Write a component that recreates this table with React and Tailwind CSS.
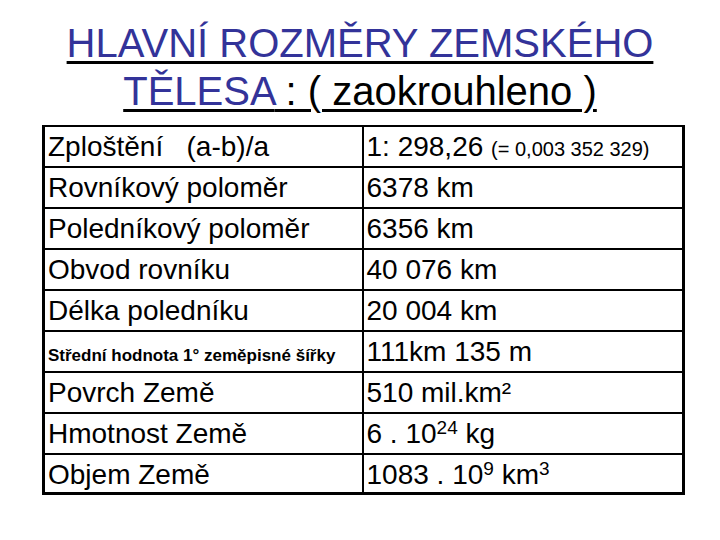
const rows = [
  { label: 'Zploštění\u00a0\u00a0\u00a0(a-b)/a', value: <>1: 298,26 <span className="text-[20px]">(= 0,003 352 329)</span></> },
  { label: 'Rovníkový poloměr', value: '6378 km' },
  { label: 'Poledníkový poloměr', value: '6356 km' },
  { label: 'Obvod rovníku', value: '40 076 km' },
  { label: 'Délka poledníku', value: '20 004 km' },
  { label: <span className="text-[17px] font-bold">Střední hodnota 1° zeměpisné šířky</span>, value: '111km 135 m' },
  { label: 'Povrch Země', value: '510 mil.km²' },
  { label: 'Hmotnost Země', value: <>6 . 10<sup className="text-[19px] top-[-0.5em]">24</sup> kg</> },
  { label: 'Objem Země', value: <>1083 . 10<sup className="text-[19px] top-[-0.5em]">9</sup> km<sup className="text-[19px] top-[-0.5em]">3</sup></> },
];

export default function App() {
  return (
    <div className="w-[720px] h-[540px] bg-white overflow-hidden [font-family:'Liberation_Sans',Arial,sans-serif] text-black">
      {/* Title */}
      <h1 className="pt-[19px] text-center text-[40px] leading-[48px] underline decoration-[3px] underline-offset-[4px]">
        <span className="text-[#333399]">HLAVNÍ ROZMĚRY ZEMSKÉHO</span>
        <br />
        <span className="text-[#333399]">TĚLESA</span>
        <span> : ( zaokrouhleno )</span>
      </h1>

      {/* Table */}
      <div className="mt-[10px] ml-[42px] w-[643px] border-t-2 border-x-[3px] border-b-[3px] border-black grid grid-cols-2">
        {rows.map((row, i) => {
          const last = i === rows.length - 1;
          const h = last ? 'h-[37px]' : 'h-[41px] border-b-2';
          return [
            <div key={`l${i}`} className={`${h} border-r-2 border-black pl-[3px] text-[28px] leading-[39px] whitespace-nowrap`}>
              {row.label}
            </div>,
            <div key={`v${i}`} className={`${h} border-black pl-[3px] text-[28px] leading-[39px] whitespace-nowrap`}>
              {row.value}
            </div>,
          ];
        })}
      </div>
    </div>
  );
}
